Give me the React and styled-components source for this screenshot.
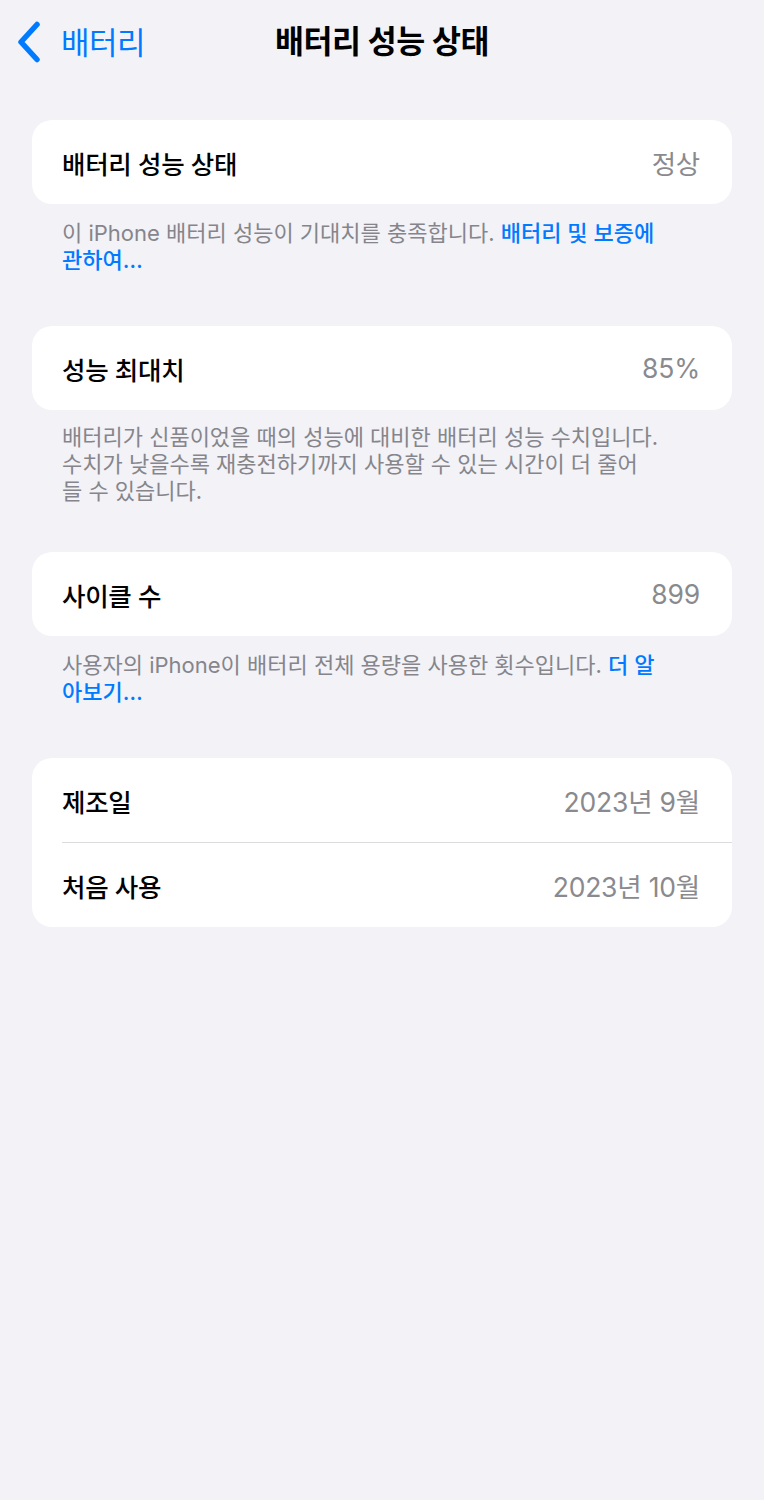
import React from "react";
import styled, { createGlobalStyle } from "styled-components";

const FONT = `Inter, "Noto Sans CJK KR", "Noto Sans", sans-serif`;

const GlobalStyle = createGlobalStyle`
  html, body {
    margin: 0;
    padding: 0;
    background: #f2f2f7;
  }
  body {
    font-family: ${FONT};
    -webkit-font-smoothing: antialiased;
  }
  * { box-sizing: border-box; }
`;

const Page = styled.div`
  min-height: 1500px;
  background: #f2f2f7;
  font-family: ${FONT};
`;

const NavBar = styled.header`
  height: 84px;
  display: grid;
  grid-template-columns: 1fr auto 1fr;
  align-items: center;
  padding: 0 16px;
`;

const BackButton = styled.button`
  justify-self: start;
  display: flex;
  align-items: center;
  gap: 19px;
  border: none;
  background: none;
  padding: 0;
  color: #007aff;
  font-family: ${FONT};
  font-size: 31px;
  letter-spacing: -0.5px;
  line-height: 1;
  cursor: pointer;
`;

const Title = styled.h1`
  margin: 0;
  font-size: 31.5px;
  font-weight: 700;
  letter-spacing: -0.4px;
  color: #000;
  line-height: 1;
`;

const Content = styled.main`
  padding: 36px 32px 0;
  display: flex;
  flex-direction: column;
`;

const Section = styled.section`
  display: flex;
  flex-direction: column;
  margin-bottom: ${(p) => p.$gap ?? 52}px;
`;

const Card = styled.div`
  background: #fff;
  border-radius: 20px;
  overflow: hidden;
`;

const Row = styled.div`
  height: 84px;
  display: flex;
  align-items: center;
  justify-content: space-between;
  padding: 0 32px 0 30px;
`;

const Divider = styled.div`
  height: 1px;
  background: #dcdce0;
  margin-left: 30px;
`;

const Label = styled.span`
  font-size: 25.5px;
  font-weight: 500;
  letter-spacing: -0.3px;
  color: #000;
`;

const Value = styled.span`
  font-size: 26.5px;
  letter-spacing: -0.2px;
  color: #8a8a8e;
`;

const Footer = styled.p`
  margin: ${(p) => p.$top ?? 16}px 0 0;
  padding: 0 30px;
  font-size: 22px;
  line-height: 27px;
  color: #85858b;
`;

const Link = styled.a`
  color: #007aff;
  font-weight: 500;
  text-decoration: none;
`;

const Chevron = () => (
  <svg width="26" height="42" viewBox="0 0 26 42" fill="none">
    <path
      d="M21 3.5 L5 21 L21 38.5"
      stroke="#007aff"
      strokeWidth="5.5"
      strokeLinecap="round"
      strokeLinejoin="round"
    />
  </svg>
);

export default function App() {
  return (
    <Page>
      <GlobalStyle />
      <NavBar>
        <BackButton>
          <Chevron />
          배터리
        </BackButton>
        <Title>배터리 성능 상태</Title>
        <span />
      </NavBar>
      <Content>
        <Section>
          <Card>
            <Row>
              <Label>배터리 성능 상태</Label>
              <Value>정상</Value>
            </Row>
          </Card>
          <Footer>
            이 iPhone 배터리 성능이 기대치를 충족합니다.{" "}
            <Link>
              배터리 및 보증에
              <br />
              관하여…
            </Link>
          </Footer>
        </Section>

        <Section $gap={47}>
          <Card>
            <Row>
              <Label>성능 최대치</Label>
              <Value>85%</Value>
            </Row>
          </Card>
          <Footer $top={14}>
            배터리가 신품이었을 때의 성능에 대비한 배터리 성능 수치입니다.
            <br />
            수치가 낮을수록 재충전하기까지 사용할 수 있는 시간이 더 줄어
            <br />
            들 수 있습니다.
          </Footer>
        </Section>

        <Section>
          <Card>
            <Row>
              <Label>사이클 수</Label>
              <Value>899</Value>
            </Row>
          </Card>
          <Footer>
            사용자의 iPhone이 배터리 전체 용량을 사용한 횟수입니다.{" "}
            <Link>
              더 알
              <br />
              아보기…
            </Link>
          </Footer>
        </Section>

        <Section $gap={0}>
          <Card>
            <Row>
              <Label>제조일</Label>
              <Value>2023년 9월</Value>
            </Row>
            <Divider />
            <Row>
              <Label>처음 사용</Label>
              <Value>2023년 10월</Value>
            </Row>
          </Card>
        </Section>
      </Content>
    </Page>
  );
}
